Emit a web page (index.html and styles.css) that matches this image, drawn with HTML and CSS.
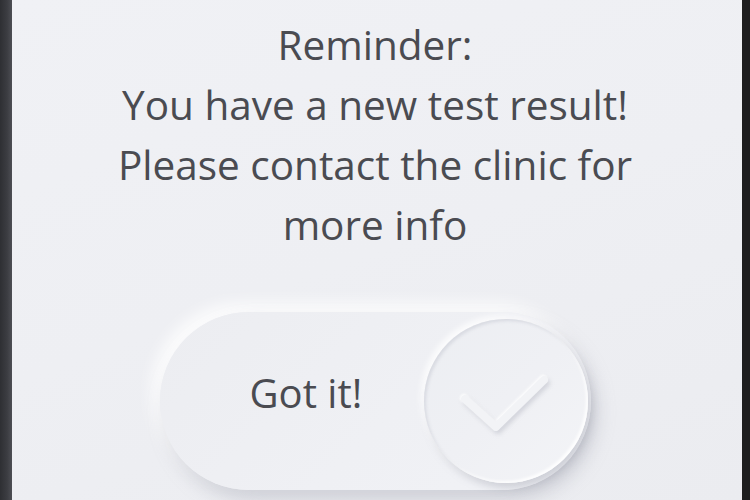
FILE: index.html
```html
<!DOCTYPE html>
<html lang="en">
<head>
<meta charset="utf-8">
<title>Reminder</title>
<link rel="stylesheet" href="styles.css">
</head>
<body>
<div class="frame">
  <div class="edge-left"></div>
  <main class="panel">
    <p class="message">Reminder:<br>You have a new test result!<br>Please contact the clinic for<br>more info</p>
    <button class="pill" type="button">
      <span class="label">Got it!</span>
      <span class="knob">
        <svg class="check" width="164" height="164" viewBox="0 0 164 164" aria-hidden="true">
          <polyline points="41,80 72,108 120,61" fill="none" stroke="#f2f3f6" stroke-width="8" stroke-linecap="round" stroke-linejoin="round"/>
        </svg>
      </span>
    </button>
  </main>
  <div class="edge-right"></div>
</div>
</body>
</html>
```
FILE: styles.css
```css
html, body {
  margin: 0;
  padding: 0;
  width: 750px;
  height: 500px;
  overflow: hidden;
  background: #1f1f20;
}

.frame {
  display: flex;
  width: 750px;
  height: 500px;
}

.edge-left {
  width: 12px;
  flex: none;
  background: linear-gradient(to right, #2e2f33, #3c3d42 60%, #4d4e54);
}

.edge-right {
  width: 8px;
  flex: none;
  background: #1e1e1f;
}

.panel {
  flex: 1;
  display: flex;
  flex-direction: column;
  align-items: center;
  padding: 15px 4px 0 0;
  background: linear-gradient(160deg, #f0f1f5 0%, #eeeff3 50%, #ebecf0 100%);
  font-family: "Open Sans", "Noto Sans", sans-serif;
  color: #4a4b51;
}

.message {
  margin: 0;
  font-size: 40.5px;
  line-height: 60px;
  text-align: center;
}

.pill {
  margin-top: 57px;
  width: 431px;
  height: 178px;
  flex: none;
  border: none;
  border-radius: 89px;
  padding: 0 3px 0 90px;
  display: flex;
  align-items: center;
  justify-content: space-between;
  background: linear-gradient(135deg, #ecedf1 0%, #eff0f4 55%, #f1f2f6 100%);
  box-shadow: 6px 10px 18px rgba(150, 152, 165, 0.35), -8px -8px 16px rgba(255, 255, 255, 0.9);
  font-family: "Open Sans", "Noto Sans", sans-serif;
  color: #4a4b51;
  cursor: pointer;
}

.label {
  font-size: 40px;
  line-height: 1;
  padding-bottom: 17px;
}

.knob {
  width: 164px;
  height: 164px;
  flex: none;
  border-radius: 50%;
  background: linear-gradient(135deg, #eceef2 0%, #eff0f4 50%, #f3f4f7 100%);
  box-shadow:
    4px 5px 9px rgba(140, 142, 158, 0.35),
    -3px -3px 6px rgba(255, 255, 255, 0.95),
    inset 2px 2px 3px rgba(160, 162, 178, 0.25),
    inset -2px -2px 3px rgba(255, 255, 255, 0.9);
  display: flex;
}

.check {
  display: block;
  filter: drop-shadow(2px 3px 2px rgba(130, 132, 150, 0.28)) drop-shadow(-1px -1px 1px rgba(255, 255, 255, 0.9));
}
```
